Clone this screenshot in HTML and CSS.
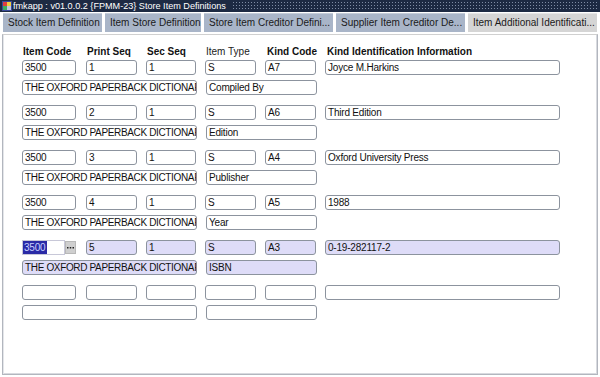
FILE: index.html
```html
<!DOCTYPE html>
<html>
<head>
<meta charset="utf-8">
<link rel="stylesheet" href="styles.css">
</head>
<body>
<div class="window">
  <div class="titlebar">
    <svg class="appicon" width="10" height="10" viewBox="0 0 10 10">
      <rect x="0" y="0" width="10" height="10" fill="#3a4a9a"/>
      <rect x="1" y="1" width="4" height="4" fill="#e04040"/>
      <rect x="5" y="1" width="4" height="4" fill="#f0d040"/>
      <rect x="1" y="5" width="4" height="4" fill="#40b060"/>
      <rect x="5" y="5" width="4" height="4" fill="#c0c8e0"/>
    </svg>
    <span class="title">fmkapp : v01.0.0.2 {FPMM-23} Store Item Definitions</span>
    <div class="dots"></div>
  </div>
  <div class="tabs">
    <div class="tab t1">Stock Item Definition</div>
    <div class="tab t2">Item Store Definition</div>
    <div class="tab t3">Store Item Creditor Defini...</div>
    <div class="tab t4">Supplier Item Creditor De...</div>
    <div class="tab t5 active">Item Additional Identificati...</div>
  </div>
  <div class="panel">
    <div class="form">
      <div class="hdr">
        <div class="c1 lbl">Item Code</div>
        <div class="c2 lbl">Print Seq</div>
        <div class="c3 lbl">Sec Seq</div>
        <div class="c4 lbl norm">Item Type</div>
        <div class="c5 lbl">Kind Code</div>
        <div class="c6 lbl">Kind Identification Information</div>
      </div>

      <div class="group">
        <div class="row">
          <div class="fld c1">3500</div>
          <div class="fld c2">1</div>
          <div class="fld c3">1</div>
          <div class="fld c4">S</div>
          <div class="fld c5">A7</div>
          <div class="fld c6">Joyce M.Harkins</div>
        </div>
        <div class="row">
          <div class="fld d1">THE OXFORD PAPERBACK DICTIONARY</div>
          <div class="fld d2">Compiled By</div>
        </div>
      </div>

      <div class="group">
        <div class="row">
          <div class="fld c1">3500</div>
          <div class="fld c2">2</div>
          <div class="fld c3">1</div>
          <div class="fld c4">S</div>
          <div class="fld c5">A6</div>
          <div class="fld c6">Third Edition</div>
        </div>
        <div class="row">
          <div class="fld d1">THE OXFORD PAPERBACK DICTIONARY</div>
          <div class="fld d2">Edition</div>
        </div>
      </div>

      <div class="group">
        <div class="row">
          <div class="fld c1">3500</div>
          <div class="fld c2">3</div>
          <div class="fld c3">1</div>
          <div class="fld c4">S</div>
          <div class="fld c5">A4</div>
          <div class="fld c6">Oxford University Press</div>
        </div>
        <div class="row">
          <div class="fld d1">THE OXFORD PAPERBACK DICTIONARY</div>
          <div class="fld d2">Publisher</div>
        </div>
      </div>

      <div class="group">
        <div class="row">
          <div class="fld c1">3500</div>
          <div class="fld c2">4</div>
          <div class="fld c3">1</div>
          <div class="fld c4">S</div>
          <div class="fld c5">A5</div>
          <div class="fld c6">1988</div>
        </div>
        <div class="row">
          <div class="fld d1">THE OXFORD PAPERBACK DICTIONARY</div>
          <div class="fld d2">Year</div>
        </div>
      </div>

      <div class="group cur">
        <div class="row">
          <div class="c1 pick">
            <div class="fld sel"><span class="hl">3500</span></div>
            <div class="ell">
              <svg width="9" height="11" viewBox="0 0 9 11">
                <rect x="1" y="5" width="1.5" height="1.5" fill="#222"/>
                <rect x="3.75" y="5" width="1.5" height="1.5" fill="#222"/>
                <rect x="6.5" y="5" width="1.5" height="1.5" fill="#222"/>
              </svg>
            </div>
          </div>
          <div class="fld c2">5</div>
          <div class="fld c3">1</div>
          <div class="fld c4">S</div>
          <div class="fld c5">A3</div>
          <div class="fld c6">0-19-282117-2</div>
        </div>
        <div class="row">
          <div class="fld d1">THE OXFORD PAPERBACK DICTIONARY</div>
          <div class="fld d2">ISBN</div>
        </div>
      </div>

      <div class="group">
        <div class="row">
          <div class="fld c1"></div>
          <div class="fld c2"></div>
          <div class="fld c3"></div>
          <div class="fld c4"></div>
          <div class="fld c5"></div>
          <div class="fld c6"></div>
        </div>
        <div class="row">
          <div class="fld d1"></div>
          <div class="fld d2"></div>
        </div>
      </div>
    </div>
  </div>
</div>
</body>
</html>
```

FILE: styles.css
```css
html, body {
  margin: 0;
  padding: 0;
  background: #ffffff;
}
body {
  width: 600px;
  height: 377px;
  overflow: hidden;
  font-family: "Liberation Sans", Arial, sans-serif;
  font-size: 10px;
  color: #111;
}
.window {
  width: 600px;
  height: 377px;
  display: flex;
  flex-direction: column;
}
.titlebar {
  height: 12px;
  background: #1d2a43;
  display: flex;
  align-items: center;
  padding-left: 2px;
  padding-right: 3px;
  flex-shrink: 0;
}
.appicon {
  flex-shrink: 0;
  margin-right: 1px;
}
.title {
  color: #ffffff;
  font-size: 9.1px;
  line-height: 12px;
  white-space: nowrap;
}
.dots {
  flex: 1;
  height: 10px;
  margin-left: 6px;
  background-image: radial-gradient(circle, #7f8ca4 0.7px, transparent 1px);
  background-size: 3px 3px;
}
.tabs {
  height: 20px;
  display: flex;
  padding-top: 1px;
  padding-left: 3px;
  gap: 3px;
  background: #ffffff;
  flex-shrink: 0;
}
.tab {
  height: 19px;
  background: #a9b5c8;
  color: #1a1a1a;
  font-size: 10px;
  line-height: 18px;
  padding-left: 5px;
  white-space: nowrap;
  overflow: hidden;
  box-sizing: border-box;
  border-top: 1px solid #c4ccd8;
}
.t1 { width: 99px; }
.t2 { width: 96px; }
.t3 { width: 129px; }
.t4 { width: 129px; }
.t5 { width: 129px; }
.tab.active {
  background: #d5d5d5;
  border-top-color: #e6e6e6;
}
.panel {
  flex: 1;
  margin: 1px 2px 2px 2px;
  border: 1px solid #b2b6be;
  border-top: 1px solid #d0d0d0;
  box-shadow: inset 1px 0 0 #e4e6ea, inset -1px 0 0 #d8dadf, inset 0 -1px 0 #d8dadf;
  background: #ffffff;
}
.form {
  padding-top: 10px;
  padding-left: 19px;
}
.hdr {
  display: flex;
  height: 13px;
  margin-bottom: 2px;
}
.lbl {
  box-sizing: border-box;
  font-weight: bold;
  font-size: 10px;
  line-height: 13px;
  color: #111;
  padding-left: 1px;
  white-space: nowrap;
}
.lbl.c5, .lbl.c6 {
  padding-left: 2px;
}
.lbl.norm {
  font-weight: normal;
  color: #222;
}
.group {
  margin-bottom: 10px;
}
.row {
  display: flex;
  height: 15px;
  margin-bottom: 5px;
}
.group .row:last-child { margin-bottom: 0; }
.c1 { width: 54px; margin-right: 10px; flex-shrink: 0; }
.c2 { width: 51px; margin-right: 9px; flex-shrink: 0; }
.c3 { width: 50px; margin-right: 9px; flex-shrink: 0; }
.c4 { width: 51px; margin-right: 9px; flex-shrink: 0; }
.c5 { width: 51px; margin-right: 9px; flex-shrink: 0; }
.c6 { width: 235px; flex-shrink: 0; }
.d1 { width: 175px; margin-right: 9px; flex-shrink: 0; }
.d2 { width: 111px; flex-shrink: 0; }
.fld {
  box-sizing: border-box;
  height: 15px;
  border: 1px solid #8c939e;
  border-radius: 3px;
  background: #ffffff;
  font-size: 10px;
  line-height: 13px;
  padding-left: 2px;
  white-space: nowrap;
  overflow: hidden;
  color: #111;
  letter-spacing: -0.2px;
}
.fld.d1 {
  letter-spacing: -0.35px;
}
.cur .fld {
  background: #dedcf8;
}
.pick {
  display: flex;
  height: 15px;
}
.cur .fld.sel {
  width: 43px;
  background: #ffffff;
  border-color: #c8c8d8;
  border-radius: 0;
  padding-left: 0;
}
.hl {
  display: inline-block;
  background: #2a2aa6;
  color: #c8d0ff;
  line-height: 13px;
  padding: 0 2px 0 1px;
}
.ell {
  width: 11px;
  height: 13px;
  margin-top: 1px;
  background: #cfcfcf;
  border: 1px solid #b8b8b8;
  box-sizing: border-box;
  display: flex;
  align-items: center;
  justify-content: center;
}
.ell svg {
  display: block;
}
```
